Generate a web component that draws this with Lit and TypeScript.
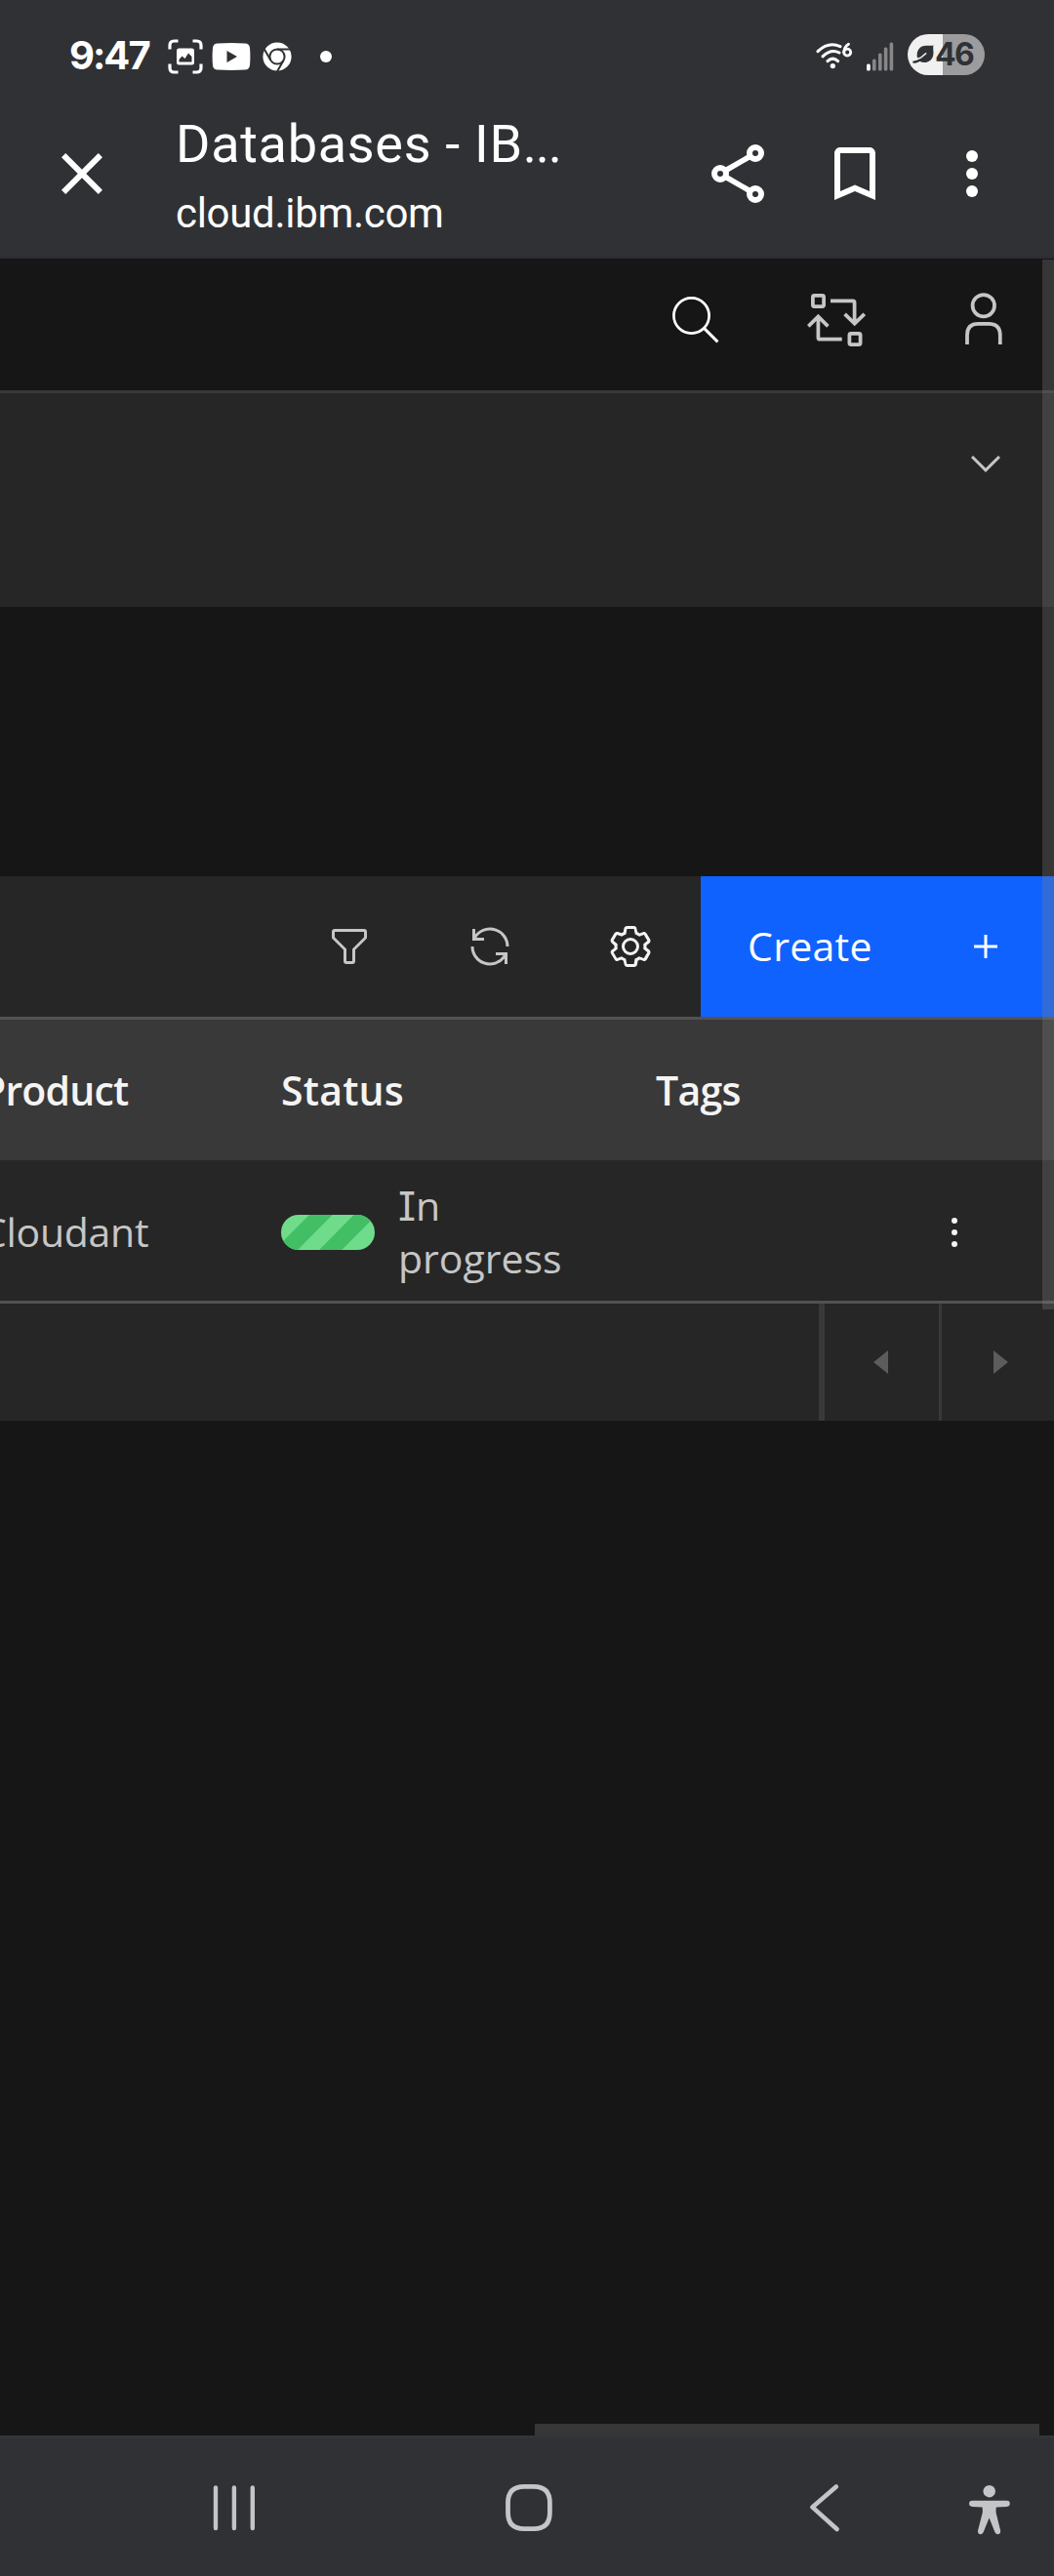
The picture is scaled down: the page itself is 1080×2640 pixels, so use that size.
import { LitElement, html, svg, css, TemplateResult } from "lit";
import { customElement } from "lit/decorators.js";

const icon = (viewBox: string, w: number, h: number, body: TemplateResult) =>
  html`<svg class="icon" viewBox=${viewBox} width=${w} height=${h} fill="currentColor" aria-hidden="true">${body}</svg>`;

/* Status bar */
const capture = icon("0 0 36 36", 36, 36, svg`
  <g fill="none" stroke="currentColor" stroke-width="3.2" stroke-linecap="butt">
    <path d="M2 10.5V6.5Q2 2 6.5 2H10.5M25.5 2H29.5Q34 2 34 6.5V10.5M34 25.5V29.5Q34 34 29.5 34H25.5M10.5 34H6.5Q2 34 2 29.5V25.5"/>
  </g>
  <path fill-rule="evenodd" d="M11.5 9.5H24.5Q27 9.5 27 12V24Q27 26.5 24.5 26.5H11.5Q9 26.5 9 24V12Q9 9.5 11.5 9.5ZM11.5 23.5H24.5V18L21 14.5 17.5 20 14.5 17.5 11.5 21Z"/>`);
const video = icon("0 0 40 30", 40, 30, svg`
  <path fill-rule="evenodd" d="M6 1.4Q20 .6 34 1.4 38.6 1.6 39 6 39.8 15 39 24 38.6 28.4 34 28.6 20 29.4 6 28.6 1.4 28.4 1 24 .2 15 1 6 1.4 1.6 6 1.4ZM15.5 9V21L26 15Z"/>`);
const chromeLogo = icon("0 0 30 30", 30, 30, svg`
  <circle cx="15" cy="15" r="14.6"/>
  <g fill="none" stroke="#303134" stroke-width="2">
    <circle cx="15" cy="15" r="7.6"/>
    <path d="M15 7.4H28.5M8.4 18.8L1.6 7M21.6 18.8L14.6 31"/>
  </g>`);
const wifi = icon("0 0 38 28", 38, 28, svg`
  <g fill="none" stroke="currentColor" stroke-width="3" stroke-linecap="round">
    <path d="M2 9.6Q13 -.8 25 4.6M7 14.8Q15.5 6.6 24 11M12 19.6Q17.3 14.6 22.6 19.6"/>
    <path d="M33.5 2.2Q29 5 28.7 10.5" stroke-width="2.8"/>
    <circle cx="32.2" cy="10.6" r="3.5" stroke-width="2.8"/>
  </g>
  <circle cx="17.3" cy="24.6" r="2.6"/>`);
const signal = icon("0 0 28 30", 28, 30, svg`
  <rect x="0" y="22.5" width="3.8" height="7" rx="1.5"/>
  <g opacity=".42"><rect x="6" y="17.5" width="3.6" height="12" rx="1.5"/><rect x="12" y="11.5" width="3.6" height="18" rx="1.5"/>
  <rect x="17.8" y="5.5" width="3.6" height="24" rx="1.5"/><rect x="23.6" y=".5" width="3.6" height="29" rx="1.5"/></g>`);
const leaf = icon("0 0 23 22", 23, 22, svg`
  <path d="M21.6 1.6C20.4 4 22.4 8.6 21 12.6 19.2 18.8 12.4 20.6 7.4 17.8 2.9 14 4 5.4 9.8 2.5 13.5 .9 18 2.4 21.6 1.6Z"/>
  <path d="M1.4 18.6C5 18.6 7.4 17 9.4 14.6" fill="none" stroke="currentColor" stroke-width="2.4" stroke-linecap="round"/>
  <path d="M8.6 14L13.6 9.8M4.2 15.6L7.6 14.4" fill="none" stroke="#f0f0f0" stroke-width="1.6" stroke-linecap="round"/>`);

/* Browser bar */
const close = icon("0 0 24 24", 72, 72, svg`<path d="M19 6.41L17.59 5 12 10.59 6.41 5 5 6.41 10.59 12 5 17.59 6.41 19 12 13.41 17.59 19 19 17.59 13.41 12z"/>`);
const share = icon("0 0 72 72", 72, 72, svg`
  <g fill="none" stroke="currentColor" stroke-width="6"><circle cx="54" cy="15" r="6"/><circle cx="18" cy="36" r="6"/><circle cx="54" cy="57" r="6"/>
  <path stroke-width="5.6" d="M49 18L23 33M49 54L23 39"/></g>`);
const bookmark = icon("0 0 24 24", 72, 72, svg`<path d="M17 3H7c-1.1 0-2 .9-2 2v16l7-3 7 3V5c0-1.1-.9-2-2-2zm0 15l-5-2.18L7 18V5h10v13z"/>`);
const more = icon("0 0 24 24", 72, 72, svg`<circle cx="12" cy="6" r="2"/><circle cx="12" cy="12" r="2"/><circle cx="12" cy="18" r="2"/>`);

/* Console header */
const search = icon("682 298 60 60", 60, 60, svg`
  <g fill="none" stroke="currentColor"><circle cx="708.5" cy="323.5" r="18.1" stroke-width="2.7"/><path stroke-width="2.9" d="M721.4 336.4L735.4 350.4"/></g>`);
const switcher = icon("827 298 60 60", 60, 60, svg`
  <g fill="none" stroke="currentColor" stroke-width="3.75">
    <rect x="832.9" y="302.9" width="11.2" height="11.2" rx="1.6"/><rect x="870.4" y="341.9" width="11.2" height="11.2" rx="1.6"/>
    <path d="M851 308.4H873.8Q875.6 308.4 875.6 310.2V331M865.6 321.8L875.7 331.7 885.8 321.8"/>
    <path d="M862.7 347.7H840.2Q838.4 347.7 838.4 345.9V325M828.3 334.4L838.4 324.4 848.4 334.4"/>
  </g>`);
const user = icon("978 298 60 60", 60, 60, svg`
  <g fill="none" stroke="currentColor" stroke-width="3.75"><circle cx="1007.8" cy="313.2" r="11.2"/>
  <path d="M991 353V343.5Q991 331.9 1002.2 331.9H1013.6Q1024.8 331.9 1024.8 343.5V353"/></g>`);
const chevron = icon("0 0 16 16", 48, 48, svg`<path d="M8 11L3 6 3.7 5.3 8 9.6 12.3 5.3 13 6z"/>`);

/* Toolbar and table */
const filter = icon("0 0 32 32", 48, 48, svg`<path d="M18,28H14a2,2,0,0,1-2-2V18.41L4.59,11A2,2,0,0,1,4,9.59V6A2,2,0,0,1,6,4H26a2,2,0,0,1,2,2V9.59A2,2,0,0,1,27.41,11L20,18.41V26A2,2,0,0,1,18,28ZM6,6V9.59l8,8V26h4V17.59l8-8V6Z"/>`);
const renew = icon("0 0 32 32", 48, 48, svg`<path d="M12,10H6.78A11,11,0,0,1,27,16h2A13,13,0,0,0,6,7.68V4H4v8h8Z"/><path d="M20,22h5.22A11,11,0,0,1,5,16H3a13,13,0,0,0,23,8.32V28h2V20H20Z"/>`);
const settings = icon("0 0 16 16", 48, 48, svg`<path fill-rule="evenodd" d="M13.5,8.4c0-0.1,0-0.3,0-0.4c0-0.1,0-0.3,0-0.4l1-0.8c0.4-0.3,0.4-0.9,0.2-1.3l-1.2-2C13.3,3.2,13,3,12.6,3c-0.1,0-0.2,0-0.3,0.1l-1.2,0.4c-0.2-0.1-0.4-0.3-0.7-0.4l-0.3-1.3C10.1,1.3,9.7,1,9.2,1H6.8c-0.5,0-0.9,0.3-1,0.8L5.6,3.1C5.3,3.2,5.1,3.3,4.9,3.4L3.7,3C3.6,3,3.5,3,3.4,3C3,3,2.7,3.2,2.5,3.5l-1.2,2C1.1,5.9,1.2,6.4,1.6,6.8l0.9,0.9c0,0.1,0,0.3,0,0.4c0,0.1,0,0.3,0,0.4L1.6,9.2c-0.4,0.3-0.5,0.9-0.2,1.3l1.2,2C2.7,12.8,3,13,3.4,13c0.1,0,0.2,0,0.3-0.1l1.2-0.4c0.2,0.1,0.4,0.3,0.7,0.4l0.3,1.3c0.1,0.5,0.5,0.8,1,0.8h2.4c0.5,0,0.9-0.3,1-0.8l0.2-1.3c0.2-0.1,0.4-0.2,0.7-0.4l1.2,0.4c0.1,0,0.2,0.1,0.3,0.1c0.4,0,0.7-0.2,0.9-0.5l1.1-2c0.2-0.4,0.2-0.9-0.2-1.3L13.5,8.4z M12.6,12l-1.7-0.6c-0.4,0.3-0.9,0.6-1.4,0.8L9.2,14H6.8l-0.4-1.8c-0.5-0.2-0.9-0.5-1.4-0.8L3.4,12l-1.2-2l1.4-1.2c-0.1-0.5-0.1-1.1,0-1.6L2.2,6l1.2-2l1.7,0.6C5.5,4.2,6,4,6.5,3.8L6.8,2h2.4l0.4,1.8c0.5,0.2,0.9,0.5,1.4,0.8L12.6,4l1.2,2l-1.4,1.2c0.1,0.5,0.1,1.1,0,1.6l1.4,1.2L12.6,12z M8,11A3,3,0,1,1,8,5A3,3,0,1,1,8,11Z M8,6A2,2,0,1,0,8,10A2,2,0,1,0,8,6Z"/>`);
const add = icon("0 0 32 32", 48, 48, svg`<path d="M17 15V8H15V15H8V17H15V24H17V17H24V15z"/>`);
const overflow = icon("0 0 32 32", 48, 48, svg`<circle cx="16" cy="8" r="2"/><circle cx="16" cy="16" r="2"/><circle cx="16" cy="24" r="2"/>`);
const caretLeft = icon("0 0 32 32", 48, 48, svg`<path d="M20 24L10 16 20 8z"/>`);
const caretRight = icon("0 0 32 32", 48, 48, svg`<path d="M12 8L22 16 12 24z"/>`);
const progressPill = icon("0 0 96 36", 96, 36, svg`
  <clipPath id="pill"><rect width="96" height="36" rx="18"/></clipPath>
  <g clip-path="url(#pill)"><rect width="96" height="36" fill="#6fdc8c"/>
  <path fill="#42be65" d="M29 0H52.6L17 36H-7ZM74.6 0H98L62.2 36H39Z"/></g>`);

/* System navigation */
const recents = icon("216 2540 48 60", 48, 60, svg`<rect x="218.8" y="2547.2" width="4.4" height="46" rx="2.2"/><rect x="237.7" y="2547.2" width="4.4" height="46" rx="2.2"/><rect x="256.6" y="2547.2" width="4.4" height="46" rx="2.2"/>`);
const home = icon("512 2540 60 60", 60, 60, svg`<path fill="none" stroke="currentColor" stroke-width="4.8" d="M537 2548.4H547Q563.4 2548.4 563.4 2565V2575Q563.4 2591.6 547 2591.6H537Q520.5 2591.6 520.5 2575V2565Q520.5 2548.4 537 2548.4Z"/>`);
const back = icon("820 2540 50 60", 50, 60, svg`<path fill="none" stroke="currentColor" stroke-width="4.6" stroke-linecap="round" stroke-linejoin="round" d="M856.8 2548.4L832.4 2569.4 857.6 2592"/>`);
const a11y = icon("988 2540 52 60", 52, 60, svg`
  <circle cx="1013.7" cy="2553.2" r="6.2"/>
  <path d="M996.3 2562.7H1031.7Q1034.8 2562.8 1034.8 2565.8 1034.8 2568.7 1031.7 2568.9L1020.8 2569.6Q1020.2 2573 1020.8 2576L1025.1 2593.3Q1025.6 2596.4 1023 2597.2 1020.6 2597.6 1019.4 2595L1013.6 2580.6 1007.7 2595Q1006.5 2597.6 1004 2597.2 1001.4 2596.4 1002.1 2593.3L1006.5 2576Q1007.2 2573 1006.5 2569.6L996.3 2568.9Q993 2568.7 993 2565.8 993 2562.8 996.3 2562.7Z"/>`);

@customElement("app-root")
export class AppRoot extends LitElement {
  static styles = css`
    :host { display: block; position: relative; width: 1080px; height: 2640px; overflow: hidden; background: #161616; color: #fff; }
    * { box-sizing: border-box; }
    .screen { display: flex; flex-direction: column; height: 2640px; font-family: "Open Sans", "Noto Sans", sans-serif; font-size: 41px; white-space: nowrap; }
    .icon { display: block; flex: none; }
    .row { display: flex; align-items: center; flex: none; }

    .status { height: 112px; padding: 4px 71px 0 71px; background: #303134; }
    .time { width: 101px; font: 700 40px/44px Inter, sans-serif; letter-spacing: -2px; margin-top: -2px; }
    .video { margin-left: 9px; }
    .chrome { margin-left: 12px; }
    .dot { width: 12px; height: 12px; border-radius: 50%; background: #fff; margin-left: 29px; }
    .wifi { margin: -3px 14px 0 auto; }
    .signal { margin-right: 14px; margin-top: -1px; }
    .battery { display: flex; align-items: center; width: 79px; height: 42px; margin-top: -4px; padding-left: 5px; border-radius: 21px; background: linear-gradient(90deg, #f0f0f0 36px, #9c9c9e 36px); color: #303134; }
    .level { font: 700 32px/42px Inter, sans-serif; letter-spacing: -1.6px; }

    .browser { height: 153px; align-items: flex-start; padding: 0 48px; background: #303134; border-bottom: 3px solid #2c2e32; }
    .browser .icon { margin-top: 30px; }
    .page { flex: 1; padding-left: 60px; font-family: Roboto, sans-serif; }
    .title { font-size: 54px; line-height: 72px; letter-spacing: .7px; }
    .dots { letter-spacing: -1.2px; }
    .url { font-size: 42px; line-height: 70px; letter-spacing: -.3px; }
    .actions { display: flex; gap: 48px; }

    .console { height: 138px; justify-content: flex-end; gap: 85px; padding: 0 42px 9px 0; border-bottom: 3px solid #393939; color: #c6c6c6; }
    .console .icon:nth-child(2) { margin-right: 6px; }
    .bright { color: #fff; }
    .crumbs { display: flex; flex: none; justify-content: flex-end; height: 219px; padding: 48px 46px 0 0; background: #262626; color: #c6c6c6; }
    .gap { height: 276px; flex: none; }

    .toolbar { height: 144px; justify-content: flex-end; background: #262626; color: #c6c6c6; }
    .tool { display: grid; place-items: center; width: 144px; height: 144px; }
    .tool.bright { color: #f4f4f4; }
    .create { display: flex; align-items: center; justify-content: space-between; width: 362px; height: 144px; padding: 0 46px 0 48px; background: #0f62fe; color: #fff; letter-spacing: .3px; }
    .create span { padding-bottom: 2px; }

    .cells { display: grid; grid-template-columns: 307px 384px 234px 144px; align-items: center; height: 144px; margin-left: -19px; }
    .head { flex: none; height: 147px; border-top: 3px solid #525252; background: #393939; color: #f4f4f4; font-weight: 600; }
    .body { flex: none; height: 147px; border-bottom: 3px solid #525252; background: #262626; color: #c6c6c6; }
    .body .cells { padding-top: 4px; }
    .product { letter-spacing: -.8px; }
    .status-title { letter-spacing: .2px; }
    .tags { letter-spacing: -.7px; }
    .name { letter-spacing: -.3px; padding-bottom: 2px; }
    .state { display: flex; align-items: center; gap: 24px; }
    .label { width: 170px; line-height: 54px; white-space: normal; padding-bottom: 2px; }
    .serif-i { font-family: Inter, sans-serif; font-feature-settings: "cv08"; line-height: 1; }
    .menu { display: grid; place-items: center; color: #f4f4f4; }

    .pages { display: flex; flex: none; justify-content: flex-end; height: 120px; background: #262626; color: #5c5c5c; }
    .prev { width: 126px; border-left: 6px solid #393939; border-right: 3px solid #393939; display: flex; align-items: center; padding-left: 35px; }
    .next { width: 115px; display: flex; align-items: center; padding-left: 35px; }

    .rest { flex: 1; display: flex; align-items: flex-end; padding-left: 548px; }
    .hbar { width: 517px; height: 12px; background: #373737; }
    .vbar { position: absolute; top: 266px; right: 0; width: 12px; height: 1076px; background: rgba(128, 128, 128, .3); }
    .system { height: 144px; padding: 0 40px 0 216px; background: #303134; border-top: 3px solid #343538; color: #c4c5c7; }
    .system .icon:nth-child(2) { margin-left: 248px; }
    .system .icon:nth-child(3) { margin-left: 248px; }
    .system .icon:nth-child(4) { margin-left: 118px; }
  `;

  render() {
    return html`
      <div class="screen">
        <div class="status row">
          <span class="time">9:47</span>${capture}
          <span class="video">${video}</span><span class="chrome">${chromeLogo}</span><span class="dot"></span>
          <span class="wifi">${wifi}</span><span class="signal">${signal}</span>
          <span class="battery">${leaf}<span class="level">46</span></span>
        </div>
        <div class="browser row">
          ${close}
          <div class="page"><div class="title">Databases - IB<span class="dots">...</span></div><div class="url">cloud.ibm.com</div></div>
          <div class="actions">${share}${bookmark}${more}</div>
        </div>
        <header class="console row"><span class="bright">${search}</span>${switcher}${user}</header>
        <div class="crumbs">${chevron}</div>
        <div class="gap"></div>
        <div class="toolbar row">
          <span class="tool">${filter}</span><span class="tool">${renew}</span><span class="tool bright">${settings}</span>
          <div class="create"><span>Create</span>${add}</div>
        </div>
        <div class="head"><div class="cells"><span class="product">Product</span><span class="status-title">Status</span><span class="tags">Tags</span></div></div>
        <div class="body"><div class="cells">
          <span class="name">Cloudant</span>
          <span class="state">${progressPill}<span class="label"><span class="serif-i">I</span>n progress</span></span>
          <span></span>
          <span class="menu">${overflow}</span>
        </div></div>
        <div class="pages"><span class="prev">${caretLeft}</span><span class="next">${caretRight}</span></div>
        <div class="rest"><div class="hbar"></div></div>
        <div class="system row">${recents}${home}${back}${a11y}</div>
      </div>
      <div class="vbar"></div>
    `;
  }
}
